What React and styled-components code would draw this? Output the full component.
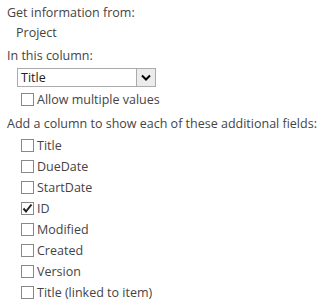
import React from 'react'
import styled, { createGlobalStyle } from 'styled-components'

const Global = createGlobalStyle`
  html, body {
    margin: 0;
    padding: 0;
    background: #fff;
  }
  body {
    font-family: 'Open Sans', 'Segoe UI', sans-serif;
    font-size: 12.5px;
    color: #444;
  }
`

const Panel = styled.div`
  width: 333px;
  height: 308px;
  padding: 3px 0 0 7px;
  box-sizing: border-box;
`

const Label = styled.div`
  height: 20px;
  line-height: 20px;
  white-space: nowrap;
  margin-top: ${p => p.$top || 0}px;
`

const Value = styled.div`
  height: 20px;
  line-height: 20px;
  padding-left: 9px;
`

const SelectBox = styled.div`
  margin: 2px 0 0 10px;
  width: 139px;
  height: 19px;
  box-sizing: border-box;
  border: 1px solid #ababab;
  display: flex;
  align-items: stretch;
  background: #fff;
`

const SelectText = styled.span`
  flex: 1;
  padding-left: 3px;
  line-height: 17px;
  color: #222;
`

const DropButton = styled.span`
  width: 18px;
  border-left: 1px solid #ababab;
  background: #ececec;
  display: flex;
  align-items: center;
  justify-content: center;
`

const CheckList = styled.div`
  display: flex;
  flex-direction: column;
  padding-left: 14px;
  margin-top: ${p => p.$top || 0}px;
`

const CheckRow = styled.label`
  display: flex;
  align-items: center;
  gap: 3px;
  height: 21px;
  white-space: nowrap;
`

const Box = styled.span`
  width: 13px;
  height: 13px;
  box-sizing: border-box;
  border: 1px solid #888;
  background: #fff;
  display: flex;
  align-items: center;
  justify-content: center;
  flex: none;
`

const Check = ({ label, checked }) => (
  <CheckRow>
    <Box>
      {checked && (
        <svg width="11" height="11" viewBox="0 0 11 11">
          <path d="M1.5 5.5 L4 8.5 L9.5 1.5" fill="none" stroke="#222" strokeWidth="2" />
        </svg>
      )}
    </Box>
    {label}
  </CheckRow>
)

const fields = [
  ['Title', false],
  ['DueDate', false],
  ['StartDate', false],
  ['ID', true],
  ['Modified', false],
  ['Created', false],
  ['Version', false],
  ['Title (linked to item)', false],
]

export default function App() {
  return (
    <Panel>
      <Global />
      <Label>Get information from:</Label>
      <Value>Project</Value>
      <Label $top={3}>In this column:</Label>
      <SelectBox>
        <SelectText>Title</SelectText>
        <DropButton>
          <svg width="10" height="7" viewBox="0 0 10 7">
            <path d="M1 1.5 L5 5.5 L9 1.5" fill="none" stroke="#000" strokeWidth="2" />
          </svg>
        </DropButton>
      </SelectBox>
      <CheckList $top={2}>
        <Check label="Allow multiple values" />
      </CheckList>
      <Label $top={4}>Add a column to show each of these additional fields:</Label>
      <CheckList $top={1}>
        {fields.map(([name, checked], i) => (
          <Check key={i} label={name} checked={checked} />
        ))}
      </CheckList>
    </Panel>
  )
}
